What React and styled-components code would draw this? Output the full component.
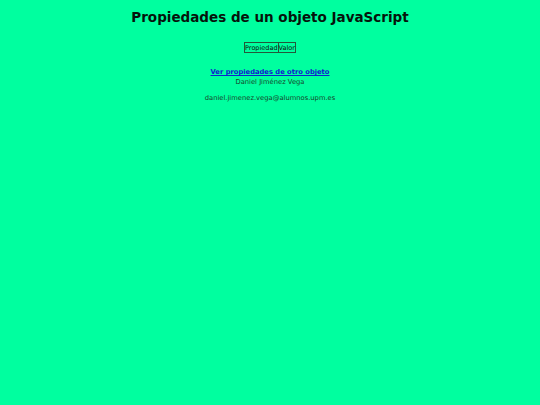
import styled, { createGlobalStyle } from "styled-components";

const GlobalStyle = createGlobalStyle`
  html, body {
    margin: 0;
    padding: 0;
    background-color: #00ff9f;
  }
  body {
    font-family: "DejaVu Sans", Verdana, sans-serif;
    color: #1a3a28;
    min-height: 405px;
  }
`;

const Page = styled.div`
  display: flex;
  flex-direction: column;
  align-items: center;
  padding-top: 9px;
`;

const Title = styled.h1`
  margin: 0;
  font-size: 13.5px;
  font-weight: bold;
  color: #06140c;
`;

const Table = styled.table`
  margin-top: 17px;
  border: 1px solid #24583a;
  border-collapse: collapse;
  font-size: 6.5px;
`;

const HeadCell = styled.th`
  border: 1px solid #24583a;
  padding: 1px 0 0;
  font-weight: normal;
  color: #06140c;
`;

const Footer = styled.div`
  display: flex;
  flex-direction: column;
  align-items: center;
  margin-top: 15px;
  font-size: 6.75px;
`;

const Link = styled.a`
  font-weight: bold;
  color: #1020d0;
  text-decoration: underline;
`;

const Line = styled.p`
  margin: ${props => (props.$spaced ? "8px 0 0" : "2px 0 0")};
  color: #173f29;
`;

export default function App() {
  return (
    <>
      <GlobalStyle />
      <Page>
        <Title>Propiedades de un objeto JavaScript</Title>
        <Table>
          <thead>
            <tr>
              <HeadCell>Propiedad</HeadCell>
              <HeadCell>Valor</HeadCell>
            </tr>
          </thead>
        </Table>
        <Footer>
          <Link href="#">Ver propiedades de otro objeto</Link>
          <Line>Daniel Jiménez Vega</Line>
          <Line $spaced>daniel.jimenez.vega@alumnos.upm.es</Line>
        </Footer>
      </Page>
    </>
  );
}
